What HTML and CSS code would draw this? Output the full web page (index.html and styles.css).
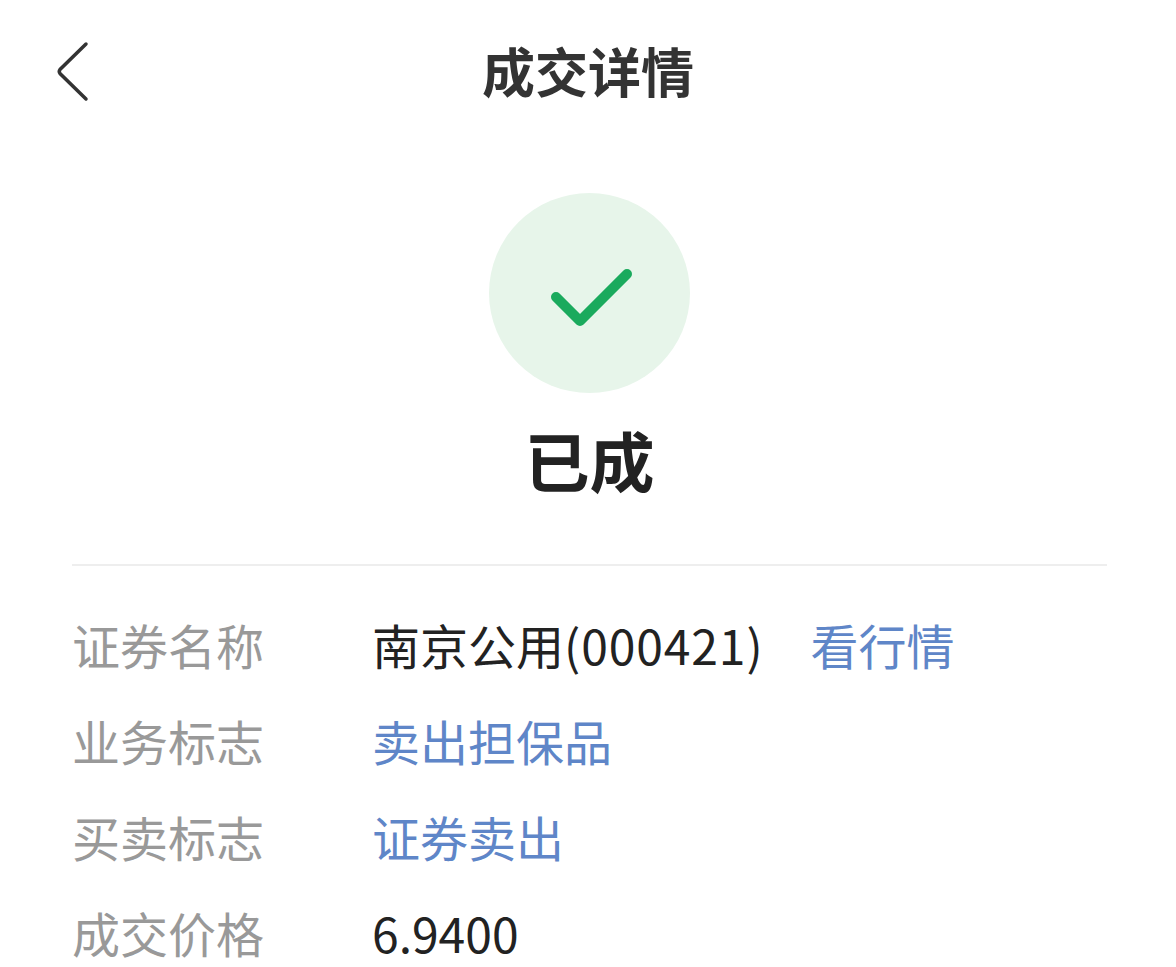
FILE: index.html
```html
<!DOCTYPE html>
<html lang="zh-CN">
<head>
    <meta charset="UTF-8">
    <title>成交详情</title>
    <link rel="stylesheet" href="styles.css">
</head>
<body>
    <header class="topbar">
        <svg class="back" width="40" height="66" viewBox="0 0 40 66">
            <path d="M34 5 L8 30.5 Q6.5 32.5 8 34.5 L34 60" />
        </svg>
        <h1 class="title">成交详情</h1>
    </header>

    <section class="status">
        <div class="status-circle">
            <svg width="201" height="200" viewBox="0 0 201 200">
                <path d="M67 104 L91 128 L138 81" />
            </svg>
        </div>
        <div class="status-text">已成</div>
    </section>

    <div class="details">
        <div class="row">
            <span class="label">证券名称</span>
            <span class="value">南京公用<span class="code">(000421)</span></span>
            <span class="link quote-link">看行情</span>
        </div>
        <div class="row">
            <span class="label">业务标志</span>
            <span class="link">卖出担保品</span>
        </div>
        <div class="row">
            <span class="label">买卖标志</span>
            <span class="link">证券卖出</span>
        </div>
        <div class="row">
            <span class="label">成交价格</span>
            <span class="value">6.9400</span>
        </div>
    </div>
</body>
</html>
```

FILE: styles.css
```css
html, body {
    margin: 0;
    height: 967px;
    overflow: hidden;
}
body {
    font-family: "Noto Sans CJK SC", "Noto Sans", sans-serif;
    background-color: #fff;
}
.topbar {
    display: flex;
    justify-content: center;
    align-items: center;
    position: relative;
    height: 145px;
}
.back {
    position: absolute;
    left: 52px;
    top: 39px;
    fill: none;
    stroke: #333;
    stroke-width: 3.5;
    stroke-linecap: round;
}
.title {
    margin: -4px 0 0;
    font-size: 53px;
    font-weight: 700;
    line-height: 1;
    color: #333;
}
.status {
    display: flex;
    flex-direction: column;
    align-items: center;
    padding-top: 48px;
    height: 371px;
    margin: 0 69px 0 72px;
    border-bottom: 2px solid #eee;
}
.status-circle {
    width: 201px;
    height: 200px;
    border-radius: 50%;
    background-color: #e7f5ea;
}
.status-circle svg {
    display: block;
    fill: none;
    stroke: #1aaa5d;
    stroke-width: 10;
    stroke-linecap: round;
    stroke-linejoin: round;
}
.status-text {
    margin-top: 31px;
    font-size: 65px;
    font-weight: 700;
    line-height: 70px;
    color: #222;
}
.details {
    padding: 30px 0 0 72px;
}
.row {
    display: flex;
    align-items: center;
    height: 96px;
    font-size: 48px;
    line-height: 48px;
}
.label {
    width: 300px;
    color: #999;
}
.value {
    color: #222;
}
.code {
    letter-spacing: 0.9px;
}
.link {
    color: #5f86c8;
}
.quote-link {
    margin-left: 47px;
}
```
